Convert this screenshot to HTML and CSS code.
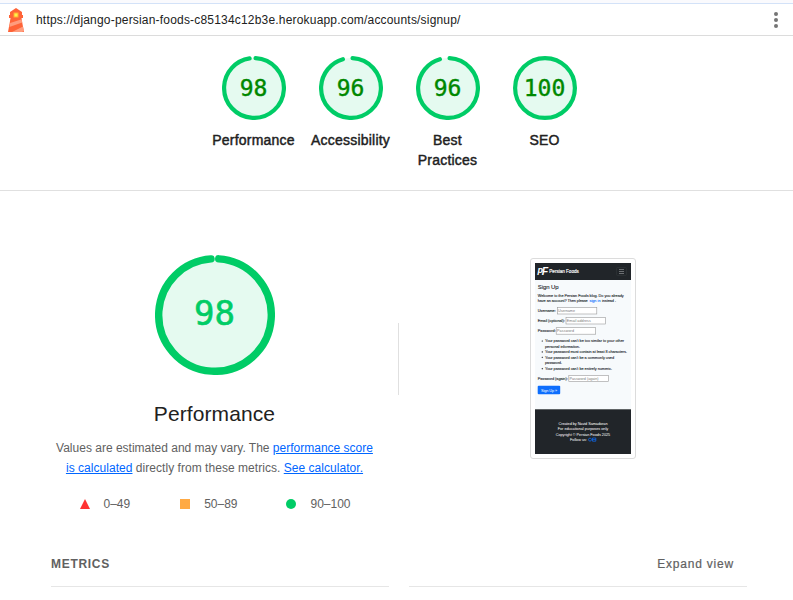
FILE: index.html
```html
<!DOCTYPE html>
<html lang="en">
<head>
<meta charset="utf-8">
<title>Lighthouse Report</title>
<link rel="stylesheet" href="styles.css">
</head>
<body>
<header class="topbar">
  <svg class="logo" width="18" height="24" viewBox="0 0 18 24">
    <path d="M9 0 15 4V7H16V10H14.5L15.5 16 17 24H1L2.5 16 3.5 10H2V7H3V4Z" fill="#ff6337"/>
    <path d="M3.2 15 14.7 11.2 15.2 14.5 2.4 19Z M5 24 16 18.5 17 23 15 24Z" fill="#ff9c7d"/>
    <rect x="6.5" y="4.5" width="5" height="5" fill="#ffad33"/>
    <rect x="7.5" y="5.5" width="3" height="3" fill="#fff04a"/>
  </svg>
  <span class="url">https://django-persian-foods-c85134c12b3e.herokuapp.com/accounts/signup/</span>
  <svg class="menu" width="6" height="18" viewBox="0 0 6 18" fill="#757575"><circle cx="3" cy="3" r="2"/><circle cx="3" cy="9" r="2"/><circle cx="3" cy="15" r="2"/></svg>
</header>

<nav class="scores">
  <a class="score">
    <span class="gauge"><svg viewBox="0 0 64 64"><circle class="disc" cx="32" cy="32" r="30"/><circle class="arc" cx="32" cy="32" r="29.9" pathLength="100" stroke-dasharray="96.8 100" transform="rotate(-87 32 32)"/></svg><b>98</b></span>
    <span class="name">Performance</span>
  </a>
  <a class="score">
    <span class="gauge"><svg viewBox="0 0 64 64"><circle class="disc" cx="32" cy="32" r="30"/><circle class="arc" cx="32" cy="32" r="29.9" pathLength="100" stroke-dasharray="94.8 100" transform="rotate(-87 32 32)"/></svg><b>96</b></span>
    <span class="name">Accessibility</span>
  </a>
  <a class="score">
    <span class="gauge"><svg viewBox="0 0 64 64"><circle class="disc" cx="32" cy="32" r="30"/><circle class="arc" cx="32" cy="32" r="29.9" pathLength="100" stroke-dasharray="94.8 100" transform="rotate(-87 32 32)"/></svg><b>96</b></span>
    <span class="name">Best<br>Practices</span>
  </a>
  <a class="score">
    <span class="gauge"><svg viewBox="0 0 64 64"><circle class="disc" cx="32" cy="32" r="30"/><circle class="arc" cx="32" cy="32" r="29.9"/></svg><b>100</b></span>
    <span class="name">SEO</span>
  </a>
</nav>

<main class="category">
  <section class="overview">
    <div class="gauge big"><svg viewBox="0 0 120 120"><circle class="disc" cx="60" cy="60" r="57"/><circle class="arc" cx="60" cy="60" r="56.3" pathLength="100" stroke-dasharray="97.8 100" transform="rotate(-86.2 60 60)"/></svg><b>98</b></div>
    <h1>Performance</h1>
    <p><span class="line one">Values are estimated and may vary. The <a>performance score</a></span><span class="line two"><a>is calculated</a> directly from these metrics. <a>See calculator.</a></span></p>
    <div class="scale">
      <span class="range fail"><svg width="10" height="10"><path d="M5 0 10 10H0Z" fill="#f33"/></svg>0–49</span>
      <span class="range average"><svg width="10" height="10"><path d="M0 0H10V10H0Z" fill="#fa4"/></svg>50–89</span>
      <span class="range pass"><svg width="10" height="10"><circle cx="5" cy="5" r="5" fill="#0c6"/></svg>90–100</span>
    </div>
  </section>
  <div class="divider"></div>
  <figure class="shot">
    <svg width="96" height="191" viewBox="0 0 96 191">
      <rect width="96" height="191" fill="#f7fafc"/>
      <rect width="96" height="17" fill="#212529"/>
      <g fill="#fff">
        <text class="brand" x="2.5" y="10.3" font-size="9" textLength="5">p</text>
        <text class="brand" x="6.7" y="11.5" font-size="10.5" textLength="7.5">F</text>
        <text x="14.3" y="9.8" font-size="4.6" textLength="29.5" stroke="#fff" stroke-width=".15">Persian Foods</text>
      </g>
      <rect x="81.5" y="4.5" width="10" height="8" rx="1" fill="none" stroke="#343a3d" stroke-width=".5"/>
      <path d="M84 6.5h5M84 8.5h5M84 10.5h5" stroke="#8b8e91" stroke-width=".7"/>
      <g fill="#212529" stroke="#212529" stroke-width=".1" font-size="3.8">
        <text x="2.7" y="26.2" font-size="6" textLength="21">Sign Up</text>
        <text x="2.7" y="34" textLength="86">Welcome to the Persian Foods blog. Do you already</text>
        <text x="2.7" y="39.2" textLength="50">have an account? Then please</text>
        <text x="54.5" y="39.2" textLength="11" class="link">sign in</text>
        <text x="67" y="39.2" textLength="14">instead .</text>
        <text x="2.7" y="49" textLength="18">Username:</text>
        <text x="2.7" y="59" textLength="27">Email (optional):</text>
        <text x="2.7" y="69.2" textLength="18">Password:</text>
        <text x="10" y="79.3" textLength="79">Your password can't be too similar to your other</text>
        <text x="10" y="84.5" textLength="35">personal information.</text>
        <text x="10" y="90.2" textLength="82">Your password must contain at least 8 characters.</text>
        <text x="10" y="95.6" textLength="69">Your password can't be a commonly used</text>
        <text x="10" y="101" textLength="17">password.</text>
        <text x="10" y="107" textLength="67">Your password can't be entirely numeric.</text>
        <text x="2.7" y="116.7" textLength="30">Password (again):</text>
        <circle cx="7.3" cy="78" r=".6"/><circle cx="7.3" cy="88.9" r=".6"/><circle cx="7.3" cy="94.3" r=".6"/><circle cx="7.3" cy="105.7" r=".6"/>
      </g>
      <g fill="#fff" stroke="#999" stroke-width=".6">
        <rect x="22.3" y="44.5" width="39.5" height="6.5"/>
        <rect x="31" y="54.5" width="39.5" height="6.5"/>
        <rect x="21.2" y="64.7" width="39.5" height="6.5"/>
        <rect x="33.8" y="112.4" width="39.5" height="6.2"/>
      </g>
      <g fill="#777" font-size="3.7">
        <text x="23" y="49" textLength="17">Username</text>
        <text x="31.8" y="59" textLength="24">Email address</text>
        <text x="22" y="69.2" textLength="17">Password</text>
        <text x="34.5" y="116.8" textLength="29">Password (again)</text>
      </g>
      <rect x="2.7" y="122.7" width="22.5" height="8.6" rx="1" fill="#0d6efd"/>
      <text x="6" y="128.5" font-size="3.8" textLength="16" fill="#fff">Sign Up »</text>
      <rect y="146.3" width="96" height="44.7" fill="#212529"/>
      <g fill="#fff" font-size="3.8">
        <text x="23.5" y="161.7" textLength="49">Created by Navid Samadoran</text>
        <text x="22.7" y="167.2" textLength="50.5">For educational purposes only</text>
        <text x="20.7" y="172.7" textLength="54.5">Copyright © Persian Foods 2025</text>
        <text x="35" y="178.2" textLength="17">Follow us:</text>
      </g>
      <circle cx="55" cy="176.6" r="1.5" fill="none" stroke="#0d6efd" stroke-width=".7"/>
      <path d="M57.5 175h3.3v3.2h-3.3zM57.5 176.6h3.3" fill="none" stroke="#0d6efd" stroke-width=".7"/>
    </svg>
  </figure>
</main>

<section class="metrics">
  <div class="metrics-head"><h2>METRICS</h2><span>Expand view</span></div>
  <div class="rules"><i></i><i></i></div>
</section>
</body>
</html>
```
FILE: styles.css
```css
* { box-sizing: border-box; }
body {
  margin: 0;
  height: 600px;
  overflow: hidden;
  background: #fff;
  color: #212121;
  font-family: "Liberation Sans", Arial, sans-serif;
}
.topbar {
  height: 36px;
  padding: 0 14px 0 7px;
  display: flex;
  align-items: center;
  border-bottom: 1px solid #dcdcdc;
  background: linear-gradient(#fafafd 3px, #d3e2f8 3px, #d3e2f8 4px, #fff 4px);
}
.logo { margin-top: 5px; }
.url {
  margin: 5px 0 0 11px;
  font-size: 12px;
  line-height: 16px;
  letter-spacing: .19px;
  white-space: nowrap;
}
.menu { margin: 4px 0 0 auto; }

.scores {
  height: 155px;
  padding: 20px 0 0 5px;
  display: flex;
  justify-content: center;
  border-bottom: 1px solid #e0e0e0;
}
.score {
  width: 97px;
  display: flex;
  flex-direction: column;
  align-items: center;
}
.gauge {
  width: 64px;
  height: 64px;
  display: grid;
  place-items: center;
}
.gauge > * { grid-area: 1 / 1; }
.gauge svg { width: 100%; height: 100%; }
.gauge b {
  font: 23px/26px "DejaVu Sans Mono", monospace;
  color: #080;
  -webkit-text-stroke: .4px #080;
}
.disc { fill: #e5faf0; }
.arc {
  fill: none;
  stroke: #0c6;
  stroke-width: 4.2;
  stroke-linecap: round;
}
.name {
  margin-top: 10px;
  font-size: 14px;
  line-height: 20px;
  letter-spacing: .22px;
  text-align: center;
  -webkit-text-stroke: .45px #212121;
}

.category {
  height: 352px;
  display: flex;
}
.overview {
  width: 398px;
  padding: 64px 0 0 31px;
  display: flex;
  flex-direction: column;
  align-items: center;
}
.big { width: 120px; height: 120px; }
.big .arc { stroke-width: 7.4; }
.gauge.big b {
  margin-bottom: 5px;
  font-size: 34px;
  line-height: 40px;
  color: #0c6;
  -webkit-text-stroke: .6px #0c6;
}
h1 {
  margin: 25px 0 0;
  font-size: 21px;
  line-height: 28px;
  letter-spacing: .1px;
  font-weight: 400;
}
p {
  margin: 10px 0 0;
  font-size: 12px;
  line-height: 20px;
  color: #616161;
}
.line { display: block; text-align: center; white-space: nowrap; }
.line.two { letter-spacing: .04px; }
p a { color: #06f; text-decoration: underline; }
.scale {
  width: 270px;
  margin: 16px 0 0;
  display: flex;
  justify-content: space-between;
  font-size: 12px;
  line-height: 20px;
  color: #616161;
}
.range { display: flex; align-items: center; gap: 14px; }
.average, .pass { position: relative; left: 1px; }
.divider {
  width: 1px;
  height: 72px;
  margin-top: 132px;
  background: #e0e0e0;
}
.shot {
  width: 106px;
  height: 201px;
  margin: 67px 0 0 131px;
  padding: 4px;
  border: 1px solid #dcdcdc;
  border-radius: 3px;
}
.shot svg { display: block; }
.shot .brand { font-weight: 700; font-style: italic; }
.shot .link { fill: #0d6efd; stroke: #0d6efd; }

.metrics { padding: 11px 46px 0 51px; color: #616161; }
.metrics-head {
  height: 20px;
  display: flex;
  justify-content: space-between;
  align-items: center;
  padding-right: 13px;
  font-size: 12px;
  line-height: 20px;
  letter-spacing: .8px;
  -webkit-text-stroke: .2px #616161;
}
h2 { margin: 0; font-size: 12px; letter-spacing: .7px; -webkit-text-stroke: 0; }
.rules {
  display: grid;
  grid-template-columns: 1fr 1fr;
  gap: 20px;
  margin-top: 12px;
}
.rules i { height: 1px; background: #e6e6e6; }
```
